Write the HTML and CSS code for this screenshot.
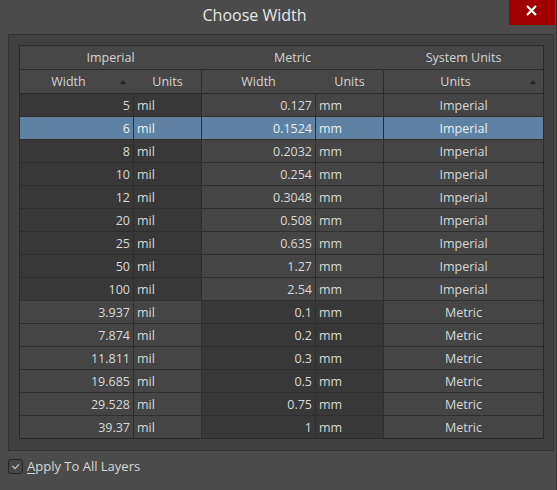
FILE: index.html
```html
<!DOCTYPE html>
<html>
<head>
<meta charset="utf-8">
<title>Choose Width</title>
<link rel="stylesheet" href="styles.css">
</head>
<body>
<div class="window">
  <div class="titlebar">
    <div class="title">Choose Width</div>
    <div class="close">
      <svg width="46" height="25" viewBox="0 0 46 25"><path d="M18 6 L27 15 M27 6 L18 15" stroke="#ffffff" stroke-width="2.2" fill="none"/></svg>
    </div>
  </div>
  <div class="panel">
    <table class="grid">
      <colgroup>
        <col class="c-w"><col class="c-u"><col class="c-w"><col class="c-u"><col class="c-s">
      </colgroup>
      <thead>
        <tr class="group">
          <th colspan="2" class="short">Imperial</th>
          <th colspan="2" class="short">Metric</th>
          <th class="last">System Units</th>
        </tr>
        <tr class="sub">
          <th class="short sort"><span>Width</span><i class="arrow"></i></th>
          <th>Units</th>
          <th class="short">Width</th>
          <th>Units</th>
          <th class="last sort"><span>Units</span><i class="arrow"></i></th>
        </tr>
      </thead>
      <tbody>
        <tr class="imp"><td class="num">5</td><td class="unit">mil</td><td class="num">0.127</td><td class="unit">mm</td><td class="sys">Imperial</td></tr>
        <tr class="imp sel"><td class="num">6</td><td class="unit">mil</td><td class="num">0.1524</td><td class="unit">mm</td><td class="sys">Imperial</td></tr>
        <tr class="imp"><td class="num">8</td><td class="unit">mil</td><td class="num">0.2032</td><td class="unit">mm</td><td class="sys">Imperial</td></tr>
        <tr class="imp"><td class="num">10</td><td class="unit">mil</td><td class="num">0.254</td><td class="unit">mm</td><td class="sys">Imperial</td></tr>
        <tr class="imp"><td class="num">12</td><td class="unit">mil</td><td class="num">0.3048</td><td class="unit">mm</td><td class="sys">Imperial</td></tr>
        <tr class="imp"><td class="num">20</td><td class="unit">mil</td><td class="num">0.508</td><td class="unit">mm</td><td class="sys">Imperial</td></tr>
        <tr class="imp"><td class="num">25</td><td class="unit">mil</td><td class="num">0.635</td><td class="unit">mm</td><td class="sys">Imperial</td></tr>
        <tr class="imp"><td class="num">50</td><td class="unit">mil</td><td class="num">1.27</td><td class="unit">mm</td><td class="sys">Imperial</td></tr>
        <tr class="imp"><td class="num">100</td><td class="unit">mil</td><td class="num">2.54</td><td class="unit">mm</td><td class="sys">Imperial</td></tr>
        <tr class="met"><td class="num">3.937</td><td class="unit">mil</td><td class="num">0.1</td><td class="unit">mm</td><td class="sys">Metric</td></tr>
        <tr class="met"><td class="num">7.874</td><td class="unit">mil</td><td class="num">0.2</td><td class="unit">mm</td><td class="sys">Metric</td></tr>
        <tr class="met"><td class="num">11.811</td><td class="unit">mil</td><td class="num">0.3</td><td class="unit">mm</td><td class="sys">Metric</td></tr>
        <tr class="met"><td class="num">19.685</td><td class="unit">mil</td><td class="num">0.5</td><td class="unit">mm</td><td class="sys">Metric</td></tr>
        <tr class="met"><td class="num">29.528</td><td class="unit">mil</td><td class="num">0.75</td><td class="unit">mm</td><td class="sys">Metric</td></tr>
        <tr class="met last-row"><td class="num">39.37</td><td class="unit">mil</td><td class="num">1</td><td class="unit">mm</td><td class="sys">Metric</td></tr>
      </tbody>
    </table>
  </div>
  <label class="check">
    <span class="box">
      <svg width="15" height="15" viewBox="0 0 15 15"><path d="M4.5 7 L7 9.6 L11 5.4" stroke="#c8c8c8" stroke-width="1.2" fill="none"/></svg>
    </span>
    <span class="check-label"><u>A</u>pply To All Layers</span>
  </label>
</div>
</body>
</html>
```

FILE: styles.css
```css
html, body {
  margin: 0;
  padding: 0;
}
body {
  background: #4b4b4b;
  font-family: "Open Sans", "Noto Sans", sans-serif;
  color: #d8d8d8;
}
.window {
  width: 557px;
  height: 490px;
  box-sizing: border-box;
  border-right: 1px solid #343434;
  background: #4b4b4b;
  display: flex;
  flex-direction: column;
}
.titlebar {
  height: 34px;
  display: flex;
  align-items: flex-start;
}
.title {
  flex: 1;
  text-align: center;
  font-size: 16px;
  line-height: 30px;
  color: #e6e6e6;
}
.close {
  width: 46px;
  height: 25px;
  margin-right: 1px;
  background: #a00000;
}
.close svg {
  display: block;
}
.panel {
  margin: 0 2px 0 8px;
  border: 1px solid #343434;
  background: #414141;
  padding: 10px 9px 11px 10px;
}
.grid {
  border-collapse: separate;
  border-spacing: 0;
  table-layout: fixed;
  width: 525px;
  border: 1px solid #2a2a2a;
  font-size: 12.5px;
}
.c-w { width: 114px; }
.c-u { width: 68px; }
.c-s { width: 159px; }
.grid th, .grid td {
  padding: 0;
  white-space: nowrap;
  overflow: hidden;
  box-sizing: border-box;
}
.grid th {
  position: relative;
  background: #474747;
  font-weight: normal;
  color: #d4d4d4;
  text-align: center;
  border-right: 1px solid #2c2c2c;
  border-bottom: 1px solid #2c2c2c;
  padding-top: 1px;
  line-height: 22px;
}
.grid th.last {
  border-right: 0;
}
.grid th.short {
  border-right-color: #474747;
}
.grid th.short::after {
  content: "";
  position: absolute;
  right: -1px;
  top: 4px;
  height: 16px;
  width: 1px;
  background: #2c2c2c;
}
.grid th.sort {
  padding-right: 16px;
}
.arrow {
  position: absolute;
  right: 7px;
  top: 10px;
  width: 0;
  height: 0;
  border-left: 3.5px solid transparent;
  border-right: 3.5px solid transparent;
  border-bottom: 4px solid #262626;
}
.grid td {
  padding-top: 1px;
  line-height: 21px;
  border-right: 1px solid #2e2e2e;
  border-bottom: 1px solid #2e2e2e;
  color: #d8d8d8;
}
.grid td.sys {
  border-right: 0;
  text-align: center;
  background: #454545;
}
.grid tr.last-row td {
  border-bottom: 0;
}
.grid td.num {
  text-align: right;
  padding-right: 3px;
}
.grid td.unit {
  text-align: left;
  padding-left: 3px;
}
.imp td:nth-child(1), .imp td:nth-child(2) { background: #383838; }
.imp td:nth-child(3), .imp td:nth-child(4) { background: #454545; }
.met td:nth-child(1), .met td:nth-child(2) { background: #454545; }
.met td:nth-child(3), .met td:nth-child(4) { background: #383838; }
.grid tr.sel td { background: #5f82a2; color: #e8eef4; }

.check {
  display: flex;
  align-items: center;
  gap: 4px;
  margin: 7px 0 0 8px;
  font-size: 13px;
  color: #d8d8d8;
}
.box {
  width: 15px;
  height: 15px;
  box-sizing: border-box;
  border: 1px solid #262626;
  border-radius: 3px;
  background: #474747;
  position: relative;
}
.box svg {
  position: absolute;
  left: -1px;
  top: -1px;
}
.check-label {
  line-height: 17px;
}
.check-label u {
  text-decoration-thickness: 1px;
  text-underline-offset: 2px;
}
```
